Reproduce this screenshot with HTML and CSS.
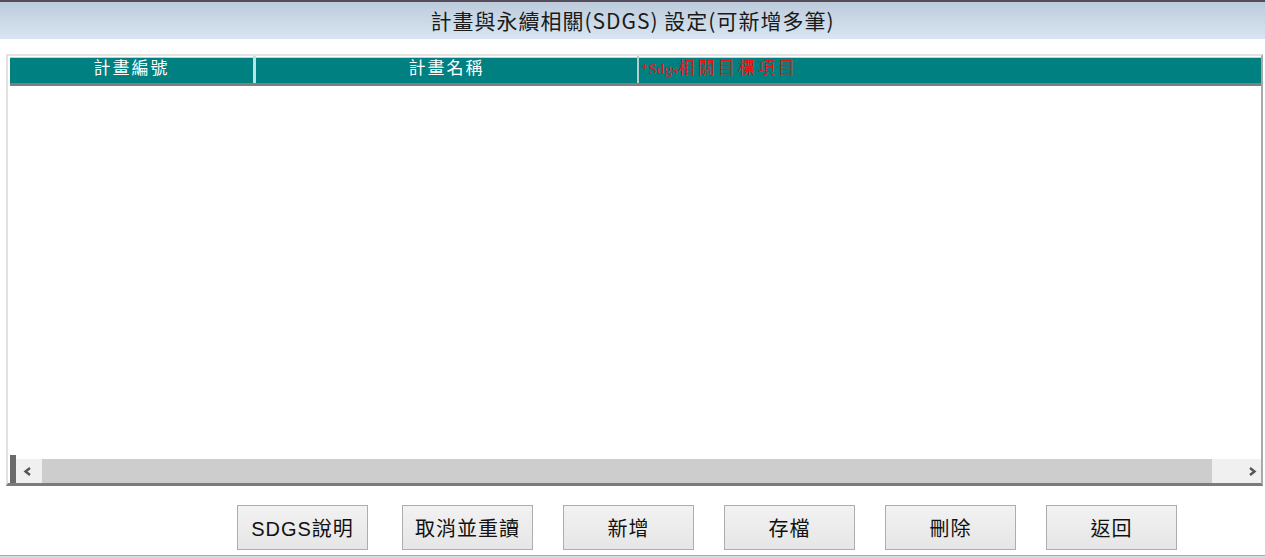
FILE: index.html
```html
<!DOCTYPE html>
<html lang="zh-Hant">
	<head>
		<meta charset="utf-8">
		<title>計畫與永續相關(SDGS) 設定</title>
		<link rel="stylesheet" href="styles.css">
	</head>
	<body>
		<div class="topline"></div>
		<div class="title">計畫與永續相關(SDGS) 設定(可新增多筆)</div>

		<div class="grid">
			<div class="head">
				<div class="cell c1">計畫編號</div>
				<div class="cell c2">計畫名稱</div>
				<div class="cell c3"><span class="latin">*Sdgs</span>相關目標項目</div>
			</div>
			<div class="rows"></div>
			<div class="hscroll">
				<div class="frozen"></div>
				<div class="arrow left">
					<svg width="9" height="11" viewBox="0 0 9 11"><polyline points="7,2 2.5,5.5 7,9" fill="none" stroke="#555" stroke-width="2.4"/></svg>
				</div>
				<div class="track"></div>
				<div class="arrow right">
					<svg width="9" height="11" viewBox="0 0 9 11"><polyline points="2,2 6.5,5.5 2,9" fill="none" stroke="#555" stroke-width="2.4"/></svg>
				</div>
			</div>
		</div>

		<div class="buttons">
			<button class="btn first">SDGS說明</button>
			<button class="btn">取消並重讀</button>
			<button class="btn">新增</button>
			<button class="btn">存檔</button>
			<button class="btn">刪除</button>
			<button class="btn">返回</button>
		</div>

		<div class="bottomline"></div>
	</body>
</html>
```

FILE: styles.css
```css
* {
	margin: 0;
	padding: 0;
	box-sizing: border-box;
}

html, body {
	width: 1265px;
	height: 557px;
	overflow: hidden;
	background: #fff;
	font-family: "Liberation Sans", "Noto Sans CJK TC", sans-serif;
}

.topline {
	height: 2px;
	background: #564b59;
}

.title {
	height: 37px;
	line-height: 36px;
	text-align: center;
	font-family: "Noto Sans CJK TC", sans-serif;
	font-size: 21px;
	letter-spacing: 1px;
	color: #1a1a1a;
	background: linear-gradient(#bccbdb, #d9e5f2);
}

.grid {
	margin: 15px 0 0 6px;
	width: 1257px;
	height: 432px;
	display: flex;
	flex-direction: column;
	border: 2px solid #e2e2e2;
	border-right-color: #a9a9a9;
	border-bottom: 3px solid #7b7b7b;
	padding: 1px 0 0 2px;
}

.head {
	display: flex;
	height: 29px;
	background: #008080;
	border-top: 1px solid #a6dede;
	border-bottom: 3px solid #7e7e7e;
	color: #fff;
	font-family: "Noto Sans CJK TC", sans-serif;
	font-size: 17px;
	line-height: 22px;
}

.cell {
	margin-top: -2px;
	white-space: nowrap;
}

.c1 {
	width: 243px;
	text-align: center;
	letter-spacing: 2px;
}

.c2 {
	width: 384px;
	text-align: center;
	letter-spacing: 2px;
	border-left: 3px solid #b4e6e6;
}

.c3 {
	flex: 1;
	margin-top: 0;
	padding-left: 2px;
	margin-top: -2px;
	color: #e81414;
	border-left: 2px solid #b9cccc;
	letter-spacing: 3px;
}

.c3 .latin {
	font-family: "Liberation Serif", serif;
	font-size: 15px;
	letter-spacing: 0;
}

.rows {
	flex: 1;
	background: #fff;
}

.hscroll {
	display: flex;
	align-items: flex-end;
	height: 28px;
}

.frozen {
	width: 6px;
	height: 28px;
	background: #6b6b6b;
}

.arrow {
	height: 24px;
	background: #f0f0f0;
	display: flex;
	align-items: center;
}

.arrow.left {
	width: 26px;
	padding-left: 7px;
}

.arrow.right {
	width: 49px;
	justify-content: flex-end;
	padding-right: 4px;
}

.track {
	flex: 1;
	height: 24px;
	background: #cdcdcd;
}

.buttons {
	display: flex;
	gap: 30px;
	margin-top: 19px;
	padding-left: 237px;
}

.btn {
	width: 131px;
	height: 45px;
	border: 1px solid #adadad;
	background: linear-gradient(#f2f2f2, #e6e6e6);
	font-family: "Liberation Sans", "Noto Sans CJK TC", sans-serif;
	font-size: 20px;
	color: #111;
	letter-spacing: 1px;
}

.btn.first {
	margin-right: 4px;
}

.bottomline {
	margin-top: 5px;
	height: 2px;
	border-top: 1px solid #9ea8b3;
	background: #d6e2ef;
}
```
